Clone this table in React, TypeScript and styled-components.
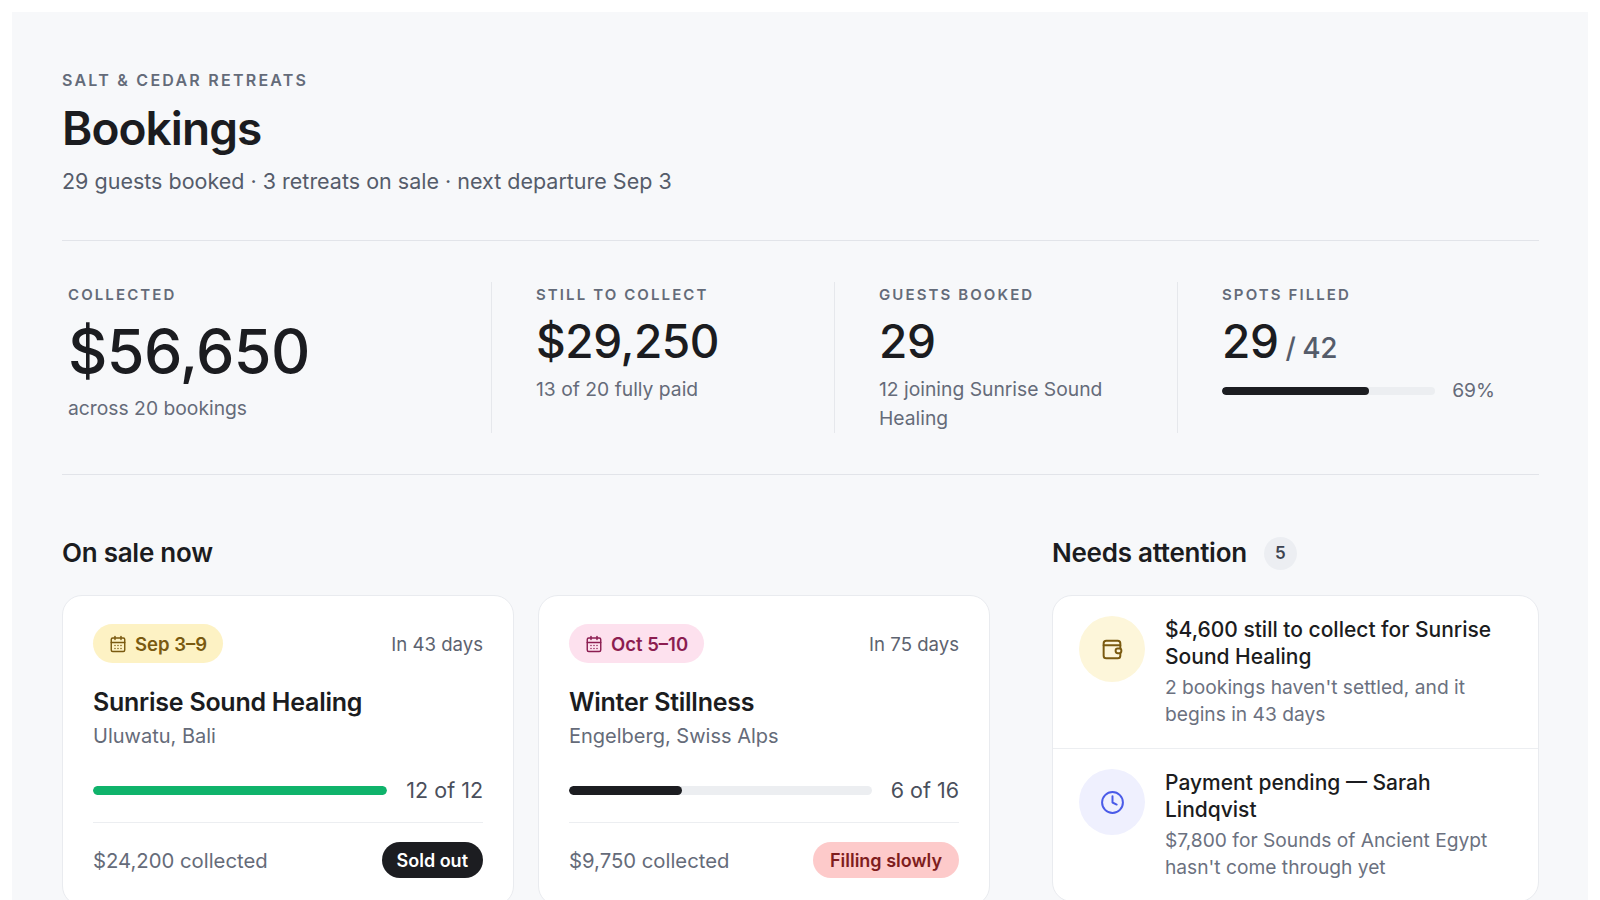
import React, { FC } from "react";
import styled, { createGlobalStyle } from "styled-components";
import { CalendarDays, Clock } from "lucide-react";

const GlobalStyle = createGlobalStyle`
  * {
    box-sizing: border-box;
  }

  body {
    margin: 0;
    background: #ffffff;
    font-family: Inter, "Noto Sans", "Liberation Sans", sans-serif;
    color: #1b1c20;
    -webkit-font-smoothing: antialiased;
  }

  #root {
    padding: 12px;
  }
`;

interface Stat {
  label: string;
  value: string;
  sub?: string;
  big?: boolean;
}

interface Retreat {
  date: string;
  tone: "yellow" | "pink";
  countdown: string;
  title: string;
  place: string;
  booked: number;
  capacity: number;
  collected: string;
  status: string;
  statusKind: "dark" | "warn";
}

interface Alert {
  kind: "wallet" | "clock";
  title: string;
  text: string;
}

const stats: Stat[] = [
  { label: "Collected", value: "$56,650", sub: "across 20 bookings", big: true },
  { label: "Still to collect", value: "$29,250", sub: "13 of 20 fully paid" },
  { label: "Guests booked", value: "29", sub: "12 joining Sunrise Sound Healing" },
];

const retreats: Retreat[] = [
  {
    date: "Sep 3–9",
    tone: "yellow",
    countdown: "In 43 days",
    title: "Sunrise Sound Healing",
    place: "Uluwatu, Bali",
    booked: 12,
    capacity: 12,
    collected: "$24,200 collected",
    status: "Sold out",
    statusKind: "dark",
  },
  {
    date: "Oct 5–10",
    tone: "pink",
    countdown: "In 75 days",
    title: "Winter Stillness",
    place: "Engelberg, Swiss Alps",
    booked: 6,
    capacity: 16,
    collected: "$9,750 collected",
    status: "Filling slowly",
    statusKind: "warn",
  },
];

const alerts: Alert[] = [
  {
    kind: "wallet",
    title: "$4,600 still to collect for Sunrise Sound Healing",
    text: "2 bookings haven't settled, and it begins in 43 days",
  },
  {
    kind: "clock",
    title: "Payment pending — Sarah Lindqvist",
    text: "$7,800 for Sounds of Ancient Egypt hasn't come through yet",
  },
];

const WalletIcon: FC = () => (
  <svg width="25" height="25" viewBox="0 0 24 24" fill="none" stroke="currentColor" strokeWidth="1.9" strokeLinecap="round" strokeLinejoin="round">
    <rect x="3.5" y="3.5" width="16" height="17" rx="2.5" />
    <path d="M3.5 8h16" />
    <rect x="15" y="11" width="5.5" height="4.5" rx="2" fill="#fdf6da" />
  </svg>
);

export default function App() {
  const spotsPct = Math.round((29 / 42) * 100);

  return (
    <>
      <GlobalStyle />
      <Page>
        <Eyebrow>Salt &amp; Cedar Retreats</Eyebrow>
        <Title>Bookings</Title>
        <Subtitle>29 guests booked · 3 retreats on sale · next departure Sep 3</Subtitle>

        <StatsRow>
          {stats.map((stat) => (
            <StatCell key={stat.label}>
              <StatLabel>{stat.label}</StatLabel>
              <StatValue $big={stat.big}>{stat.value}</StatValue>
              <StatSub $big={stat.big}>{stat.sub}</StatSub>
            </StatCell>
          ))}
          <StatCell>
            <StatLabel>Spots filled</StatLabel>
            <StatValue>
              29<StatOf> / 42</StatOf>
            </StatValue>
            <MeterRow>
              <Track $height={8}>
                <Fill $color="#1c1d21" style={{ width: `${spotsPct}%` }} />
              </Track>
              <MeterText>{spotsPct}%</MeterText>
            </MeterRow>
          </StatCell>
        </StatsRow>

        <Columns>
          <section>
            <SectionHead>
              <SectionTitle>On sale now</SectionTitle>
            </SectionHead>
            <CardGrid>
              {retreats.map((retreat) => (
                <RetreatCard key={retreat.title}>
                  <CardTop>
                    <DateBadge $tone={retreat.tone}>
                      <CalendarDays size={18} strokeWidth={1.9} />
                      {retreat.date}
                    </DateBadge>
                    <Countdown>{retreat.countdown}</Countdown>
                  </CardTop>
                  <RetreatTitle>{retreat.title}</RetreatTitle>
                  <Place>{retreat.place}</Place>
                  <CapacityRow>
                    <Track $height={9}>
                      <Fill
                        $color={retreat.booked === retreat.capacity ? "#0fb36b" : "#1c1d21"}
                        style={{ width: `${(retreat.booked / retreat.capacity) * 100}%` }}
                      />
                    </Track>
                    <CapacityText>
                      {retreat.booked} of {retreat.capacity}
                    </CapacityText>
                  </CapacityRow>
                  <CardFooter>
                    <Collected>{retreat.collected}</Collected>
                    <StatusPill $kind={retreat.statusKind}>{retreat.status}</StatusPill>
                  </CardFooter>
                </RetreatCard>
              ))}
            </CardGrid>
          </section>

          <section>
            <SectionHead>
              <SectionTitle>Needs attention</SectionTitle>
              <CountBadge>5</CountBadge>
            </SectionHead>
            <AlertCard>
              {alerts.map((alert) => (
                <AlertItem key={alert.title}>
                  <AlertIcon $kind={alert.kind}>
                    {alert.kind === "wallet" ? <WalletIcon /> : <Clock size={25} strokeWidth={1.9} />}
                  </AlertIcon>
                  <AlertBody>
                    <AlertTitle>{alert.title}</AlertTitle>
                    <AlertText>{alert.text}</AlertText>
                  </AlertBody>
                </AlertItem>
              ))}
            </AlertCard>
          </section>
        </Columns>
      </Page>
    </>
  );
}

const Page = styled.main`
  min-height: 1000px;
  background: #f7f8fa;
  padding: 58px 49px 40px 50px;
`;

const Eyebrow = styled.div`
  font-size: 16px;
  line-height: 20px;
  font-weight: 600;
  letter-spacing: 0.14em;
  text-transform: uppercase;
  color: #646b79;
`;

const Title = styled.h1`
  margin: 10px 0 0;
  font-size: 46px;
  line-height: 56px;
  font-weight: 600;
  letter-spacing: -0.02em;
  color: #1b1c20;
`;

const Subtitle = styled.p`
  margin: 10px 0 0;
  font-size: 21.5px;
  line-height: 30px;
  color: #555c6a;
`;

const StatsRow = styled.div`
  margin-top: 44px;
  padding: 41px 0;
  border-top: 1px solid #e2e4e9;
  border-bottom: 1px solid #e2e4e9;
  display: grid;
  grid-template-columns: 429fr 343fr 343fr 362fr;
`;

const StatCell = styled.div`
  padding: 0 44px;
  border-left: 1px solid #e6e8ec;

  &:first-child {
    padding-left: 6px;
    border-left: none;
  }
`;

const StatLabel = styled.div`
  font-size: 15px;
  line-height: 26px;
  font-weight: 600;
  letter-spacing: 0.14em;
  text-transform: uppercase;
  color: #646b79;
`;

const StatValue = styled.div<{ $big?: boolean }>`
  margin-top: ${({ $big }) => ($big ? "10px" : "7px")};
  font-size: ${({ $big }) => ($big ? "61px" : "46px")};
  line-height: ${({ $big }) => ($big ? "66px" : "52px")};
  font-weight: 500;
  letter-spacing: -0.01em;
  color: #1b1c20;
`;

const StatOf = styled.span`
  font-size: 28px;
  font-weight: 500;
  color: #555c6a;
`;

const StatSub = styled.div<{ $big?: boolean }>`
  margin-top: ${({ $big }) => ($big ? "10px" : "8px")};
  font-size: 19.3px;
  line-height: 29px;
  color: #656b79;
`;

const MeterRow = styled.div`
  margin-top: 2px;
  display: flex;
  align-items: center;
  gap: 17px;
`;

const Track = styled.div<{ $height: number }>`
  flex: 1;
  height: ${({ $height }) => $height}px;
  border-radius: 999px;
  background: #eceef1;
  overflow: hidden;
`;

const Fill = styled.div<{ $color: string }>`
  height: 100%;
  border-radius: 999px;
  background: ${({ $color }) => $color};
`;

const MeterText = styled.span`
  font-size: 19.3px;
  line-height: 29px;
  color: #656b79;
`;

const Columns = styled.div`
  margin-top: 62px;
  display: grid;
  grid-template-columns: 1fr 487px;
  gap: 62px;
`;

const SectionHead = styled.div`
  display: flex;
  align-items: center;
  gap: 17px;
  height: 32px;
  margin-bottom: 26px;
`;

const SectionTitle = styled.h2`
  margin: 0;
  font-size: 26px;
  line-height: 32px;
  font-weight: 600;
  letter-spacing: -0.01em;
  color: #1b1c20;
`;

const CountBadge = styled.span`
  width: 33px;
  height: 33px;
  border-radius: 50%;
  background: #eceef2;
  display: inline-flex;
  align-items: center;
  justify-content: center;
  font-size: 17px;
  font-weight: 600;
  color: #3d4350;
`;

const CardGrid = styled.div`
  display: grid;
  grid-template-columns: 1fr 1fr;
  gap: 24px;
`;

const RetreatCard = styled.article`
  background: #ffffff;
  border: 1px solid #e9ebef;
  border-radius: 20px;
  padding: 28px 30px 27px;
`;

const CardTop = styled.div`
  display: flex;
  align-items: center;
  justify-content: space-between;
`;

const DateBadge = styled.span<{ $tone: "yellow" | "pink" }>`
  display: inline-flex;
  align-items: center;
  gap: 8px;
  height: 39px;
  padding: 0 16px;
  border-radius: 999px;
  font-size: 18.5px;
  font-weight: 600;
  background: ${({ $tone }) => ($tone === "yellow" ? "#fdf2c4" : "#fde1ee")};
  color: ${({ $tone }) => ($tone === "yellow" ? "#7a5a10" : "#8c1d51")};
`;

const Countdown = styled.span`
  font-size: 18.6px;
  color: #5d6370;
`;

const RetreatTitle = styled.h3`
  margin: 23px 0 0;
  font-size: 25px;
  line-height: 32px;
  font-weight: 600;
  letter-spacing: -0.01em;
  color: #1b1c20;
`;

const Place = styled.div`
  margin-top: 4px;
  font-size: 20px;
  line-height: 28px;
  color: #656b79;
`;

const CapacityRow = styled.div`
  margin-top: 25px;
  padding-bottom: 17px;
  border-bottom: 1px solid #eceef1;
  display: flex;
  align-items: center;
  gap: 19px;
`;

const CapacityText = styled.span`
  font-size: 21.5px;
  line-height: 30px;
  color: #4a4f5c;
`;

const CardFooter = styled.div`
  margin-top: 19px;
  display: flex;
  align-items: center;
  justify-content: space-between;
`;

const Collected = styled.span`
  font-size: 20.3px;
  color: #656b79;
`;

const StatusPill = styled.span<{ $kind: "dark" | "warn" }>`
  height: 36px;
  padding: 0 ${({ $kind }) => ($kind === "dark" ? "15px" : "17px")};
  border-radius: 999px;
  display: inline-flex;
  align-items: center;
  font-size: 18px;
  font-weight: 600;
  background: ${({ $kind }) => ($kind === "dark" ? "#1c1d21" : "#fdcaca")};
  color: ${({ $kind }) => ($kind === "dark" ? "#ffffff" : "#7f1d1d")};
`;

const AlertCard = styled.div`
  background: #ffffff;
  border: 1px solid #e9ebef;
  border-radius: 20px;
  overflow: hidden;
`;

const AlertItem = styled.div`
  display: flex;
  align-items: flex-start;
  gap: 20px;
  padding: 20px 26px;

  &:not(:last-child) {
    border-bottom: 1px solid #eceef1;
  }
`;

const AlertIcon = styled.div<{ $kind: "wallet" | "clock" }>`
  flex: none;
  width: 66px;
  height: 66px;
  border-radius: 50%;
  display: flex;
  align-items: center;
  justify-content: center;
  background: ${({ $kind }) => ($kind === "wallet" ? "#fdf6da" : "#eff0fe")};
  color: ${({ $kind }) => ($kind === "wallet" ? "#7a5a10" : "#4a5be8")};
`;

const AlertBody = styled.div`
  min-width: 0;
`;

const AlertTitle = styled.div`
  font-size: 21px;
  line-height: 27px;
  font-weight: 500;
  color: #1b1c20;
`;

const AlertText = styled.div`
  margin-top: 4px;
  font-size: 19.2px;
  line-height: 27px;
  color: #6b7180;
`;
